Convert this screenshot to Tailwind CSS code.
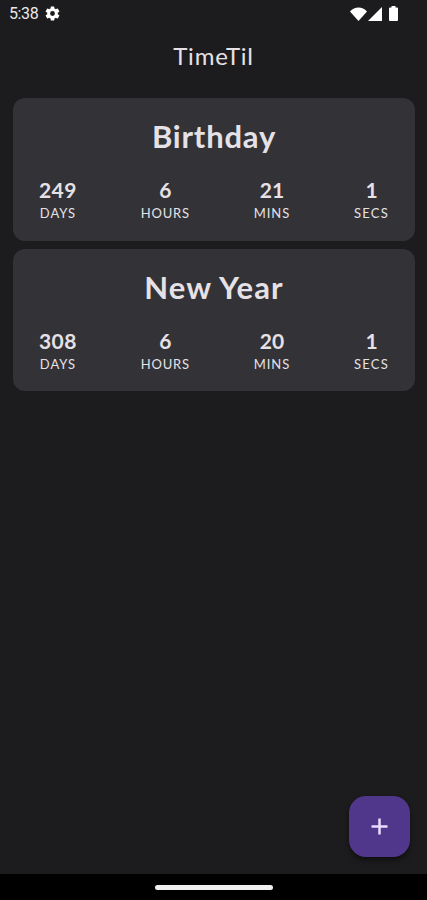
<!DOCTYPE html>
<html lang="en">
<head>
    <meta charset="UTF-8">
    <meta name="viewport" content="width=device-width, initial-scale=1.0">
    <title>TimeTil</title>
    <script src="https://cdn.jsdelivr.net/npm/@tailwindcss/browser@4"></script>
</head>
<body class="bg-[#1c1c1e] text-[#e5e1e6] font-['Lato',sans-serif]">
    <div class="h-screen flex flex-col overflow-hidden">
        <!-- Status bar -->
        <div class="h-7 shrink-0 flex items-center pl-[9px] pr-[29px] pb-px text-white">
            <span class="font-['Roboto',sans-serif] text-base tracking-[-0.4px] text-[#e8e8e8]">5:38</span>
            <svg class="ml-[6px] size-[17px]" viewBox="0 0 24 24" fill="currentColor">
                <path fill-rule="evenodd" d="M19.4 13a7.6 7.6 0 0 0 0-2l2.1-1.6a.6.6 0 0 0 .1-.7l-2-3.4a.6.6 0 0 0-.7-.2l-2.4 1a7.3 7.3 0 0 0-1.7-1L14.4 2.5a.6.6 0 0 0-.5-.5h-3.8a.6.6 0 0 0-.5.5l-.4 2.6a7.3 7.3 0 0 0-1.7 1l-2.4-1a.6.6 0 0 0-.7.2l-2 3.4a.6.6 0 0 0 .1.7L4.600 11a7.6 7.6 0 0 0 0 2l-2.1 1.6a.6.6 0 0 0-.1.7l2 3.4c.1.2.4.3.7.2l2.4-1a7.3 7.3 0 0 0 1.7 1l.4 2.6c0 .3.2.5.5.5h3.8c.3 0 .5-.2.5-.5l.4-2.6a7.3 7.3 0 0 0 1.7-1l2.4 1c.3.1.6 0 .7-.2l2-3.400a.6.6 0 0 0-.1-.7zM12 15.400a3.400 3.400 0 1 1 0-6.800 3.400 3.400 0 0 1 0 6.800z"/>
            </svg>
            <div class="ml-auto flex items-center">
                <svg class="w-[17px] h-[14px]" viewBox="0 0 17 14" fill="currentColor">
                    <path d="M0 4.500C4.500 -1 12.500 -1 17 4.500L8.500 14z"/>
                </svg>
                <svg class="ml-px w-[14px] h-[14px]" viewBox="0 0 14 14" fill="currentColor">
                    <path d="M14 0v14H0z"/>
                </svg>
                <svg class="ml-[7px] w-[9px] h-[15px]" viewBox="0 0 9 15" fill="currentColor">
                    <path d="M2.500 0h4v1.500H8q1 0 1 1V14q0 1-1 1H1q-1 0-1-1V2.500q0-1 1-1h1.500z"/>
                </svg>
            </div>
        </div>

        <!-- App bar -->
        <h1 class="h-[70px] shrink-0 pt-[14px] text-center text-2xl leading-7 tracking-[0.8px]">TimeTil</h1>

        <!-- Countdown cards -->
        <main class="flex-1 flex flex-col gap-2 pl-[13px] pr-3">
            <section class="h-[143px] rounded-xl bg-[#333236] pt-[19px] px-[26px]">
                <h2 class="text-center text-[31px] leading-[38px] font-bold tracking-[0.8px]">Birthday</h2>
                <div class="mt-[23px] flex justify-between text-center">
                    <div>
                        <div class="text-[21px] leading-6 font-bold tracking-[0.4px]">249</div>
                        <div class="mt-px text-[13px] leading-5 tracking-[0.9px]">DAYS</div>
                    </div>
                    <div>
                        <div class="text-[21px] leading-6 font-bold">6</div>
                        <div class="mt-px text-[13px] leading-5 tracking-[0.8px]">HOURS</div>
                    </div>
                    <div>
                        <div class="text-[21px] leading-6 font-bold">21</div>
                        <div class="mt-px text-[13px] leading-5 tracking-[0.9px]">MINS</div>
                    </div>
                    <div>
                        <div class="text-[21px] leading-6 font-bold">1</div>
                        <div class="mt-px text-[13px] leading-5 tracking-[1.2px]">SECS</div>
                    </div>
                </div>
            </section>

            <section class="h-[142px] rounded-xl bg-[#333236] pt-[19px] px-[26px]">
                <h2 class="text-center text-[31px] leading-[38px] font-bold tracking-[1.1px]">New Year</h2>
                <div class="mt-[23px] flex justify-between text-center">
                    <div>
                        <div class="text-[21px] leading-6 font-bold tracking-[0.4px]">308</div>
                        <div class="mt-px text-[13px] leading-5 tracking-[0.9px]">DAYS</div>
                    </div>
                    <div>
                        <div class="text-[21px] leading-6 font-bold">6</div>
                        <div class="mt-px text-[13px] leading-5 tracking-[0.8px]">HOURS</div>
                    </div>
                    <div>
                        <div class="text-[21px] leading-6 font-bold">20</div>
                        <div class="mt-px text-[13px] leading-5 tracking-[0.9px]">MINS</div>
                    </div>
                    <div>
                        <div class="text-[21px] leading-6 font-bold">1</div>
                        <div class="mt-px text-[13px] leading-5 tracking-[1.2px]">SECS</div>
                    </div>
                </div>
            </section>
        </main>

        <!-- Add button -->
        <div class="shrink-0 flex justify-end pr-[17px] pb-[17px]">
            <button class="size-[61px] rounded-[17px] bg-[#51378b] text-[#eaddff] flex items-center justify-center shadow-md shadow-black/40" aria-label="Add">
                <svg class="size-[17px]" viewBox="0 0 17 17" fill="none" stroke="currentColor" stroke-width="2.5">
                    <path d="M8.500 .5v16M.5 8.500h16"/>
                </svg>
            </button>
        </div>

        <!-- Navigation bar -->
        <div class="h-[26px] shrink-0 bg-black flex justify-center items-center">
            <div class="w-[118px] h-[5px] rounded-full bg-[#f0f0f0]"></div>
        </div>
    </div>
</body>
</html>
